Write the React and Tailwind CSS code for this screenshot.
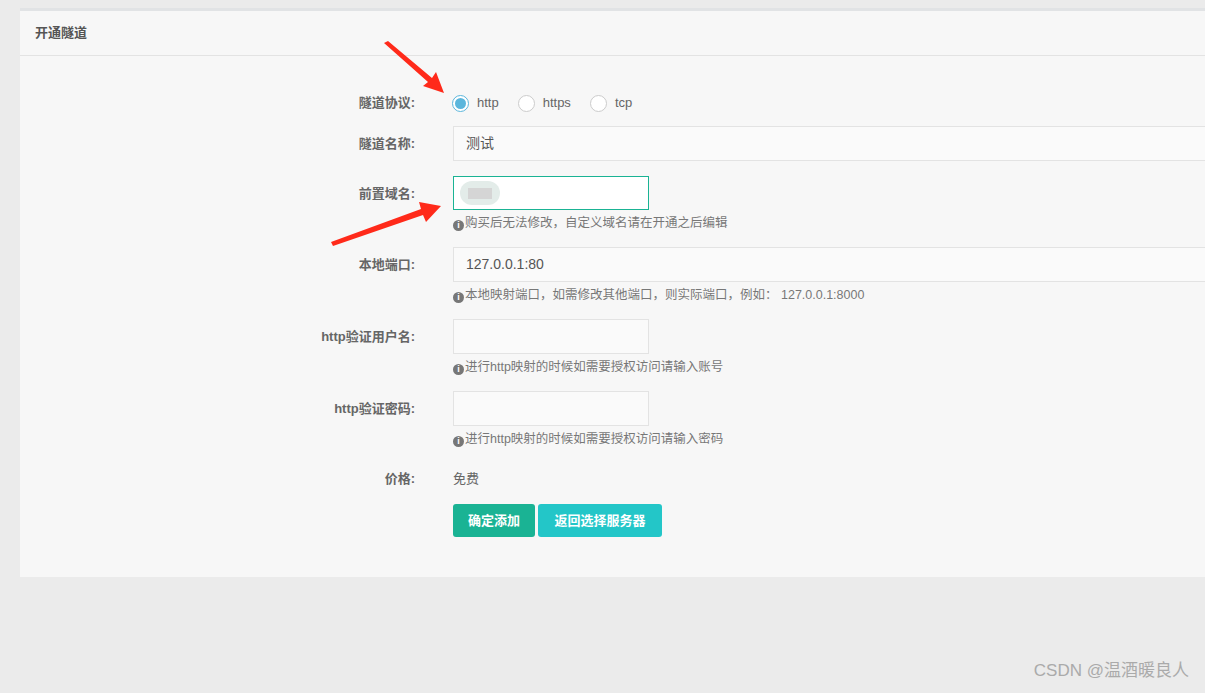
const F = { fontFamily: '"Liberation Sans","Noto Sans CJK SC",sans-serif' };

function Info() {
  return (
    <span className="inline-flex items-center justify-center w-[11px] h-[11px] rounded-full bg-[#777] text-white text-[9px] font-bold leading-none mr-[1px] align-[-1px]">i</span>
  );
}

function Row({ label, children, mt }) {
  return (
    <div className={`flex ${mt}`}>
      <div className="w-[395px] shrink-0 text-right text-[13px] font-bold text-[#666] pt-[8px]">{label}</div>
      <div className="ml-[38px] flex-1">{children}</div>
    </div>
  );
}

function Help({ children }) {
  return <div className="mt-[5px] text-[12.5px] leading-[17px] text-[#777]"><Info />{children}</div>;
}

function Radio({ checked, label }) {
  return (
    <label className="flex items-center mr-[19px]">
      <span className={`w-[17px] h-[17px] rounded-full border ${checked ? 'border-[#5bb6dc]' : 'border-[#ccc]'} bg-white flex items-center justify-center`}>
        {checked && <span className="w-[11px] h-[11px] rounded-full bg-[#5bb6dc]" />}
      </span>
      <span className="ml-[8px] text-[13px] text-[#666]">{label}</span>
    </label>
  );
}

export default function App() {
  const input = "h-[35px] border border-[#e3e3e3] bg-[#fafafa] px-[12px] text-[14px] text-[#555] flex items-center";
  return (
    <div style={F} className="relative w-[1205px] h-[693px] overflow-hidden bg-[#ebebeb]">
      <div className="h-[8px]" />
      <div className="ml-[20px] w-[1200px] bg-[#f7f7f7] border-t-[3px] border-[#e1e3e5]">
        <div className="h-[45px] border-b border-[#e3e3e3] flex items-center px-[15px] text-[13px] font-bold text-[#555]">开通隧道</div>
        <div className="pb-[40px]">
          <div className="flex pt-[37px] h-[55px]">
            <div className="w-[395px] text-right text-[13px] font-bold text-[#666] leading-[20px]">隧道协议:</div>
            <div className="ml-[37px] flex items-center h-[20px]">
              <Radio checked label="http" />
              <Radio label="https" />
              <Radio label="tcp" />
            </div>
          </div>
          <Row label="隧道名称:" mt="mt-[15px]"><div className={input}>测试</div></Row>
          <Row label="前置域名:" mt="mt-[15px]">
            <div className="h-[34px] w-[196px] border border-[#1ab394] bg-white flex items-center pl-[6px]">
              <span className="w-[40px] h-[24px] rounded-full bg-[#e3ece9] flex items-center justify-center"><span className="w-[24px] h-[11px] bg-[#d5d5d5]" /></span>
            </div>
            <Help>购买后无法修改，自定义域名请在开通之后编辑</Help>
          </Row>
          <Row label="本地端口:" mt="mt-[15px]">
            <div className={input}>127.0.0.1:80</div>
            <Help>本地映射端口，如需修改其他端口，则实际端口，例如： 127.0.0.1:8000</Help>
          </Row>
          <Row label="http验证用户名:" mt="mt-[15px]">
            <div className={`${input} w-[196px]`} />
            <Help>进行http映射的时候如需要授权访问请输入账号</Help>
          </Row>
          <Row label="http验证密码:" mt="mt-[15px]">
            <div className={`${input} w-[196px]`} />
            <Help>进行http映射的时候如需要授权访问请输入密码</Help>
          </Row>
          <div className="flex mt-[21px] leading-[20px]">
            <div className="w-[395px] text-right text-[13px] font-bold text-[#666]">价格:</div>
            <div className="ml-[38px] text-[13px] text-[#666]">免费</div>
          </div>
          <div className="flex mt-[15px] ml-[433px] gap-[3px]">
            <button className="h-[33px] w-[82px] rounded-[3px] bg-[#1ab394] text-white text-[13px] font-bold">确定添加</button>
            <button className="h-[33px] w-[124px] rounded-[3px] bg-[#23c6c8] text-white text-[13px] font-bold">返回选择服务器</button>
          </div>
        </div>
      </div>
      <svg className="absolute inset-0 pointer-events-none" width="1205" height="693">
        <polygon points="384,43 388,41 432,78 436,72 444,93 423,86 428,82" fill="#ff2a1a" />
        <polygon points="331,242 333,246 423,215 426,222 441,206 419,202 421,209" fill="#ff2a1a" />
      </svg>
      <div className="absolute right-[16px] bottom-[10px] text-[17px] text-[#aaa]">CSDN @温酒暖良人</div>
    </div>
  );
}
